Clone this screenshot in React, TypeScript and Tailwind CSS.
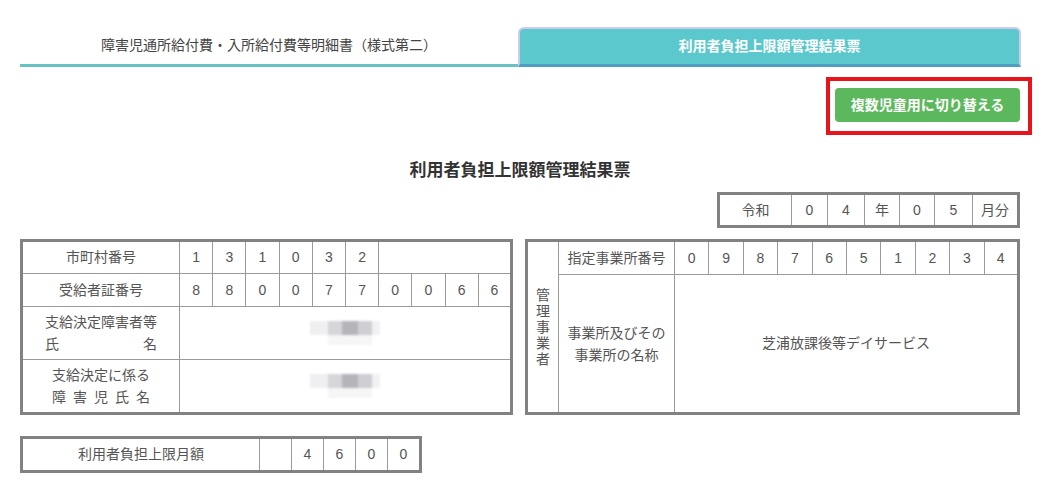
import React from 'react';

const cell = 'border border-[#9a9a9a] text-center text-[14px] text-[#555] font-normal p-0';
const tableBase = 'border-collapse table-fixed border-[3px] border-[#828282]';

const cityNo = ['1', '3', '1', '0', '3', '2'];
const recipientNo = ['8', '8', '0', '0', '7', '7', '0', '0', '6', '6'];
const officeNo = ['0', '9', '8', '7', '6', '5', '1', '2', '3', '4'];

function BlurredName() {
  return (
    <div className="mx-auto w-[70px] blur-[1px]">
      <div className="flex h-[14px]">
        <div className="w-[18px] bg-[#efeff1]" />
        <div className="w-[14px] bg-[#d6d6da]" />
        <div className="w-[16px] bg-[#b4b4ba]" />
        <div className="w-[14px] bg-[#ceced3]" />
        <div className="w-[8px] bg-[#f1f1f3]" />
      </div>
      <div className="ml-[18px] h-[10px] w-[44px] bg-[#f6f6f7]" />
    </div>
  );
}

export default function App() {
  return (
    <div className="min-h-[487px] bg-white pt-[27px] pl-5 font-['Liberation_Sans','Noto_Sans_CJK_JP',sans-serif] text-[#444]">
      {/* tabs */}
      <div className="flex w-[1001px]">
        <div className="flex h-[40px] w-[498px] items-center justify-center border-b-[3px] border-[#67c3c3] text-[14px] text-[#444]">
          障害児通所給付費・入所給付費等明細書（様式第二）
        </div>
        <div className="flex h-[40px] flex-1 items-center justify-center rounded-t-[6px] border-2 border-b-[3px] border-[#cdc9f1] border-b-[#4e9fc3] bg-[#5ac8cc] text-[14px] font-bold text-white">
          利用者負担上限額管理結果票
        </div>
      </div>

      {/* switch button, framed in red */}
      <div className="mt-[21px] flex w-[1000px] justify-end">
        <div className="relative">
          <button className="h-[34px] w-[185px] rounded-[4px] bg-[#5cb85c] text-[14px] font-bold text-white">
            複数児童用に切り替える
          </button>
          <span className="pointer-events-none absolute -top-[11px] -right-[12px] -bottom-[13px] -left-[9px] border-4 border-[#e8141b]" />
        </div>
      </div>

      <h1 className="mt-[37px] w-[1000px] text-center text-[17px] leading-[24px] font-bold text-[#333]">
        利用者負担上限額管理結果票
      </h1>

      {/* year / month */}
      <div className="mt-[9px] flex w-[1000px] justify-end">
        <table className={`${tableBase} w-[300px]`}>
          <tbody>
            <tr className="h-[33px]">
              <td className={`${cell} w-[73px]`}>令和</td>
              <td className={`${cell} w-[36px]`}>0</td>
              <td className={`${cell} w-[37px]`}>4</td>
              <td className={`${cell} w-[35px]`}>年</td>
              <td className={`${cell} w-[35px]`}>0</td>
              <td className={`${cell} w-[38px]`}>5</td>
              <td className={`${cell} w-[46px]`}>月分</td>
            </tr>
          </tbody>
        </table>
      </div>

      {/* main tables */}
      <div className="mt-[11px] flex w-[1000px] gap-3">
        <table className={`${tableBase} w-[493px]`}>
          <colgroup>
            <col className="w-[158px]" />
            {recipientNo.map((_, i) => (
              <col key={i} />
            ))}
          </colgroup>
          <tbody>
            <tr className="h-[33px]">
              <td className={cell}>市町村番号</td>
              {cityNo.map((d, i) => (
                <td key={i} className={cell}>{d}</td>
              ))}
              <td colSpan={4} className={cell} />
            </tr>
            <tr className="h-[33px]">
              <td className={cell}>受給者証番号</td>
              {recipientNo.map((d, i) => (
                <td key={i} className={cell}>{d}</td>
              ))}
            </tr>
            <tr className="h-[53px]">
              <td className={`${cell} leading-[22px]`}>
                <div className="mx-auto w-[112px]">
                  <div>支給決定障害者等</div>
                  <div className="flex justify-between">
                    <span>氏</span>
                    <span>名</span>
                  </div>
                </div>
              </td>
              <td colSpan={10} className={cell}>
                <BlurredName />
              </td>
            </tr>
            <tr className="h-[54px]">
              <td className={`${cell} leading-[22px]`}>
                <div className="mx-auto w-[98px]">
                  <div>支給決定に係る</div>
                  <div className="flex justify-between">
                    {'障害児氏名'.split('').map((c, i) => (
                      <span key={i}>{c}</span>
                    ))}
                  </div>
                </div>
              </td>
              <td colSpan={10} className={cell}>
                <BlurredName />
              </td>
            </tr>
          </tbody>
        </table>

        <table className={`${tableBase} w-[495px]`}>
          <colgroup>
            <col className="w-[32px]" />
            <col className="w-[116px]" />
            {officeNo.map((_, i) => (
              <col key={i} />
            ))}
          </colgroup>
          <tbody>
            <tr className="h-[34px]">
              <td rowSpan={2} className={`${cell} leading-[16px]`}>
                {'管理事業者'.split('').map((c, i) => (
                  <div key={i}>{c}</div>
                ))}
              </td>
              <td className={cell}>指定事業所番号</td>
              {officeNo.map((d, i) => (
                <td key={i} className={cell}>{d}</td>
              ))}
            </tr>
            <tr className="h-[139px]">
              <td className={`${cell} leading-[22px]`}>
                事業所及びその
                <br />
                事業所の名称
              </td>
              <td colSpan={10} className={cell}>
                芝浦放課後等デイサービス
              </td>
            </tr>
          </tbody>
        </table>
      </div>

      {/* monthly cap */}
      <table className={`${tableBase} mt-[21px] w-[399px]`}>
        <tbody>
          <tr className="h-[34px]">
            <td className={`${cell} w-[238px]`}>利用者負担上限月額</td>
            <td className={`${cell} w-[32px]`} />
            <td className={`${cell} w-[32px]`}>4</td>
            <td className={`${cell} w-[32px]`}>6</td>
            <td className={`${cell} w-[32px]`}>0</td>
            <td className={`${cell} w-[33px]`}>0</td>
          </tr>
        </tbody>
      </table>
    </div>
  );
}
